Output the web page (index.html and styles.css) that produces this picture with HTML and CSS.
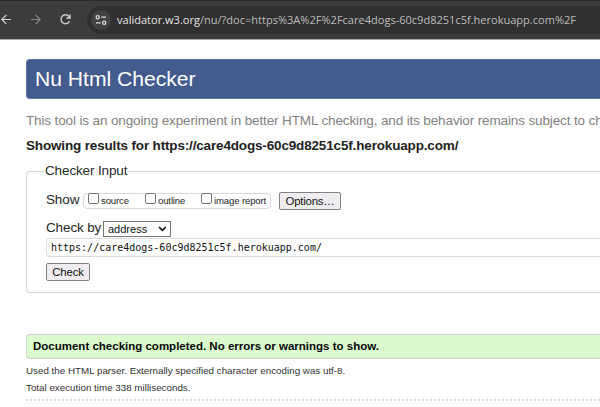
FILE: index.html
```html
<!DOCTYPE html>
<html lang="en">
<head>
<meta charset="utf-8">
<title>Nu Html Checker</title>
<link rel="stylesheet" href="styles.css">
</head>
<body>
<div class="browser">
  <svg class="nav-icons" width="80" height="39" viewBox="0 0 80 39" fill="none" stroke-width="1.2">
    <path d="M11 19.5H2M6.3 15L1.8 19.5L6.3 24" stroke="#d0d0d0"/>
    <path d="M31 19.5H40M35.7 15L40.2 19.5L35.7 24" stroke="#858585"/>
    <path d="M69.6 17.3A4.5 4.5 0 1 0 69.6 21.2M70 14.5V18H66.5" stroke="#d0d0d0" stroke-width="1.4"/>
  </svg>
  <div class="address-bar">
    <svg class="site-info" width="20" height="20" viewBox="0 0 20 20" fill="none" stroke="#dedede" stroke-width="1.2">
      <circle cx="10" cy="10" r="10" fill="#424242" stroke="none"/>
      <circle cx="6.7" cy="7.2" r="1.6"/><path d="M10.3 7.2H15M5 12.8H9.7"/><circle cx="13.2" cy="12.8" r="1.6"/>
    </svg>
    <span class="url"><span class="host">validator.w3.org</span>/nu/?doc=https%3A%2F%2Fcare4dogs-60c9d8251c5f.herokuapp.com%2F</span>
  </div>
</div>
<main class="page">
  <h1 class="banner"><span>Nu Html Checker</span></h1>
  <p class="intro">This tool is an ongoing experiment in better HTML checking, and its behavior remains subject to ch</p>
  <h2 class="heading">Showing results for https://care4dogs-60c9d8251c5f.herokuapp.com/</h2>
  <fieldset class="checker">
    <legend>Checker Input</legend>
    <div class="row show-row">
      <span class="label show-label">Show</span>
      <div class="choices">
        <label><input type="checkbox"><span>source</span></label>
        <label><input type="checkbox"><span>outline</span></label>
        <label><input type="checkbox"><span>image report</span></label>
      </div>
      <button class="button options">Options…</button>
    </div>
    <div class="row by-row">
      <span class="label by-label">Check by</span>
      <div class="select"><span>address</span>
        <svg width="9" height="6" viewBox="0 0 9 6" fill="none" stroke="#111" stroke-width="1.7"><path d="M1 1L4.4 4.4L7.8 1"/></svg>
      </div>
    </div>
    <div class="doc">https://care4dogs-60c9d8251c5f.herokuapp.com/</div>
    <button class="button check">Check</button>
  </fieldset>
  <div class="success">Document checking completed. No errors or warnings to show.</div>
  <p class="note parser">Used the HTML parser. Externally specified character encoding was utf-8.</p>
  <p class="note time">Total execution time 338 milliseconds.</p>
  <div class="divider"></div>
</main>
</body>
</html>
```
FILE: styles.css
```css
* { box-sizing: border-box; }
body {
  margin: 0;
  width: 600px;
  height: 407px;
  overflow: hidden;
  background: #fefefe;
  color: #282828;
  font-family: "Liberation Sans", Arial, sans-serif;
  white-space: nowrap;
}
h1, h2, p { margin: 0; font-weight: normal; }
.browser {
  display: flex;
  height: 40px;
  background: #3c3c3c;
  border-top: 1px solid #292929;
  border-bottom: 1px solid #aaa;
}
.nav-icons { margin-top: -1px; flex: none; }
.address-bar {
  flex: 1;
  display: flex;
  align-items: center;
  height: 28px;
  margin: 5px 0 0 7px;
  padding-left: 4px;
  border-radius: 14px 0 0 14px;
  background: #303030;
}
.url {
  margin-left: 6px;
  color: #bcbcbc;
  font: 11.04px/16px "Open Sans", "Noto Sans", sans-serif;
}
.host { color: #e4e4e4; }
.page { margin-left: 26px; padding-top: 19px; width: 574px; }
.banner {
  height: 40px;
  padding-left: 8px;
  border: 1px solid #5d75a6;
  border-right: 0;
  border-radius: 4px 0 0 4px;
  background: #435c8d;
  color: #fff;
  font-size: 21.1px;
  line-height: 38px;
}
.intro, .heading, legend, .label { font-size: 13.5px; letter-spacing: -0.13px; line-height: 18px; }
.intro { margin-top: 13px; color: #828282; }
.heading { margin-top: 7px; color: #222; font-weight: bold; letter-spacing: -0.16px; }
.checker {
  height: 131px;
  margin: 7px 0 0;
  padding: 0 0 0 19px;
  border: 1px solid #d8d8d8;
  border-right: 0;
  border-radius: 4px 0 0 4px;
}
legend { margin-left: -2px; padding: 0 1px; }
.row { display: flex; }
.show-row { margin-top: 12px; height: 18px; }
.show-label { width: 37px; line-height: 16px; }
.choices {
  display: flex;
  width: 188px;
  height: 16px;
  margin-top: 1px;
  padding-left: 4px;
  border: 1px solid #d8d8d8;
  border-radius: 4px;
  font-size: 9.6px;
  letter-spacing: -0.15px;
  line-height: 14px;
}
.choices label { display: flex; width: 57px; }
.choices label:nth-child(2) { width: 56px; }
.choices input {
  appearance: none;
  flex: none;
  width: 11px;
  height: 11px;
  margin: -1px 2px 0 0;
  border: 1px solid #777;
  border-radius: 2px;
  background: #fff;
}
.button {
  display: block;
  padding: 0;
  height: 18px;
  border: 1px solid #828282;
  border-radius: 2px;
  background: #efedef;
  color: #111;
  font: 11.4px/15px "Liberation Sans", Arial, sans-serif;
  letter-spacing: -0.2px;
}
.options { width: 62px; margin-left: 8px; }
.by-row { margin-top: 11px; height: 16px; }
.by-label { width: 57px; line-height: 14px; }
.select {
  display: flex;
  justify-content: space-between;
  align-items: center;
  width: 68px;
  height: 16px;
  padding: 0 3px 0 4px;
  border: 1px solid #777;
  background: #fff;
  color: #111;
  font-size: 11px;
  line-height: 14px;
}
.doc {
  height: 19px;
  margin-top: 1px;
  padding-left: 4px;
  border: 1px solid #dcdcdc;
  border-right: 0;
  border-radius: 4px 0 0 4px;
  color: #111;
  font: 10px/17px "DejaVu Sans Mono", monospace;
}
.check { width: 44px; margin-top: 6px; }
.success {
  height: 25px;
  margin-top: 41px;
  padding-left: 6px;
  border: 1px solid #d0d0d0;
  border-right: 0;
  border-radius: 4px 0 0 4px;
  background: #dbfbcf;
  color: #080808;
  font-size: 11.5px;
  font-weight: bold;
  line-height: 22px;
}
.note { color: #333; font-size: 9.8px; line-height: 12px; }
.parser { margin-top: 6px; }
.time { margin-top: 5px; }
.divider { margin-top: 5px; height: 2px; border-top: 2px dotted #dedede; }
```
